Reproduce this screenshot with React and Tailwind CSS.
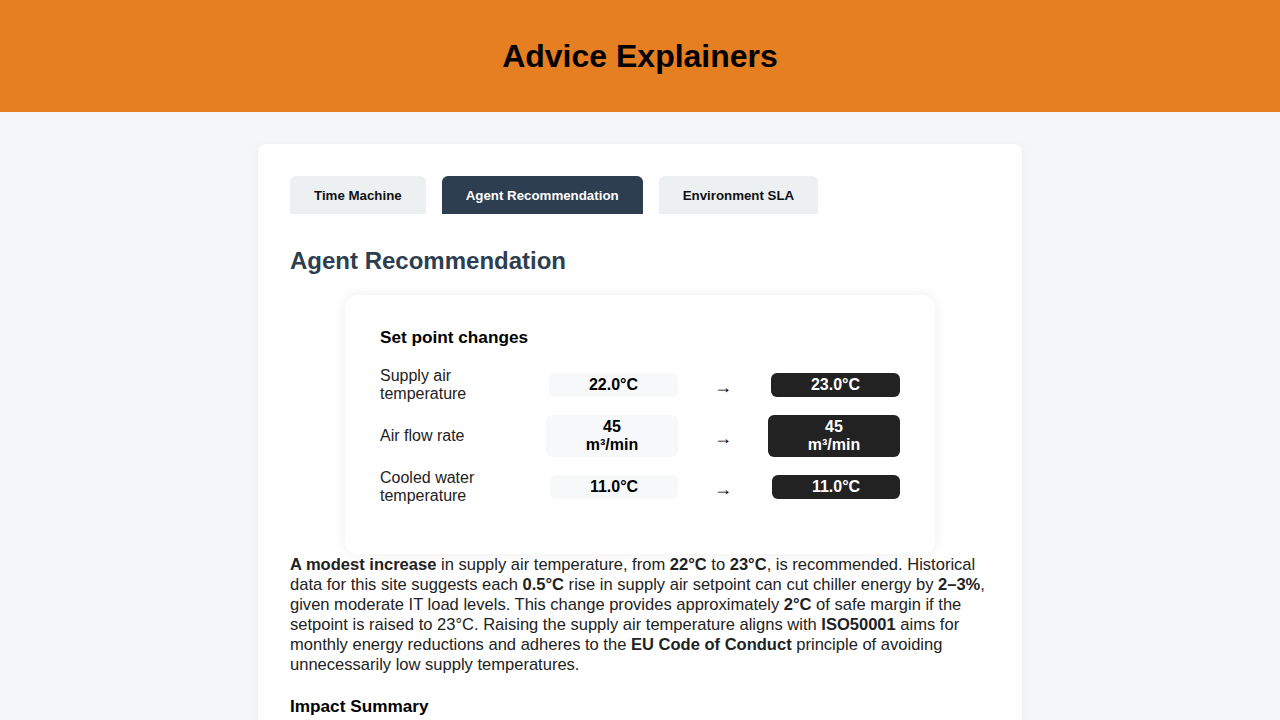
const tabs = ['Time Machine', 'Agent Recommendation', 'Environment SLA'];

const rows = [
    { label: ['Supply air', 'temperature'], from: ['22.0°C'], to: ['23.0°C'], fw: 'w-[129px]', tw: 'w-[129px]' },
    { label: ['Air flow rate'], from: ['45', 'm³/min'], to: ['45', 'm³/min'], fw: 'w-[132px]', tw: 'w-[132px]' },
    { label: ['Cooled water', 'temperature'], from: ['11.0°C'], to: ['11.0°C'], fw: 'w-[128px]', tw: 'w-[128px]' },
];

export default function App() {
    const active = 'Agent Recommendation';

    return (
        <div className="min-h-screen bg-[#f5f6f8] font-['Liberation_Sans',Arial,sans-serif] text-[#222]">
            {/* Header */}
            <header className="flex h-[112px] items-center justify-center bg-[#e67e22]">
                <h1 className="text-[32px] font-bold text-black">Advice Explainers</h1>
            </header>

            {/* Main card */}
            <main className="mx-auto mt-8 w-[764px] rounded-lg bg-white p-8 shadow-[0_2px_8px_rgba(0,0,0,0.05)]">
                <div className="flex gap-4">
                    {tabs.map((t) => (
                        <button
                            key={t}
                            className={`h-[38px] rounded-t-[6px] px-6 pt-[2px] text-[13.3px] font-bold ${
                                t === active ? 'bg-[#2c3e50] text-white' : 'bg-[#ecf0f1] text-[#111]'
                            }`}
                        >
                            {t}
                        </button>
                    ))}
                </div>

                <h2 className="mt-[31px] text-[24px] leading-8 font-bold text-[#2c3e50]">Agent Recommendation</h2>

                {/* Set point changes */}
                <div className="mx-auto mt-[18px] w-[590px] rounded-xl bg-white px-[35px] pt-[32px] pb-[49px] shadow-[0_0_14px_rgba(0,0,0,0.07)]">
                    <h3 className="text-[17.2px] leading-5 font-bold text-black">Set point changes</h3>
                    <div className="mt-[20px] grid grid-cols-[166px_132px_90px_132px] items-center gap-y-[12px]">
                        {rows.map((r, i) => (
                            <div key={i} className="contents">
                                <div className="text-[16px] leading-[18px] text-[#222]">
                                    {r.label.map((l) => (
                                        <div key={l}>{l}</div>
                                    ))}
                                </div>
                                <div
                                    className={`${r.fw} justify-self-end rounded-md bg-[#f6f8fa] py-[3px] text-center text-[16px] leading-[18px] font-bold text-black`}
                                >
                                    {r.from.map((v) => (
                                        <div key={v}>{v}</div>
                                    ))}
                                </div>
                                <div className="pt-[4px] text-center text-[18px] text-black">→</div>
                                <div
                                    className={`${r.tw} justify-self-end rounded-md bg-[#222] py-[3px] text-center text-[16px] leading-[18px] font-bold text-white`}
                                >
                                    {r.to.map((v) => (
                                        <div key={v}>{v}</div>
                                    ))}
                                </div>
                            </div>
                        ))}
                    </div>
                </div>

                <p className="mt-[1px] text-[16.55px] leading-5 text-[#222]">
                    <b>A modest increase</b> in supply air temperature, from <b>22°C</b> to <b>23°C</b>, is recommended.
                    Historical data for this site suggests each <b>0.5°C</b> rise in supply air setpoint can cut chiller
                    energy by <b>2–3%</b>, given moderate IT load levels. This change provides approximately <b>2°C</b> of
                    safe margin if the setpoint is raised to 23°C. Raising the supply air temperature aligns with{' '}
                    <b>ISO50001</b> aims for monthly energy reductions and adheres to the <b>EU Code of Conduct</b>{' '}
                    principle of avoiding unnecessarily low supply temperatures.
                </p>

                <h3 className="mt-[21px] text-[17.2px] leading-5 font-bold text-black">Impact Summary</h3>
                <div className="h-[200px]" />
            </main>
        </div>
    );
}
